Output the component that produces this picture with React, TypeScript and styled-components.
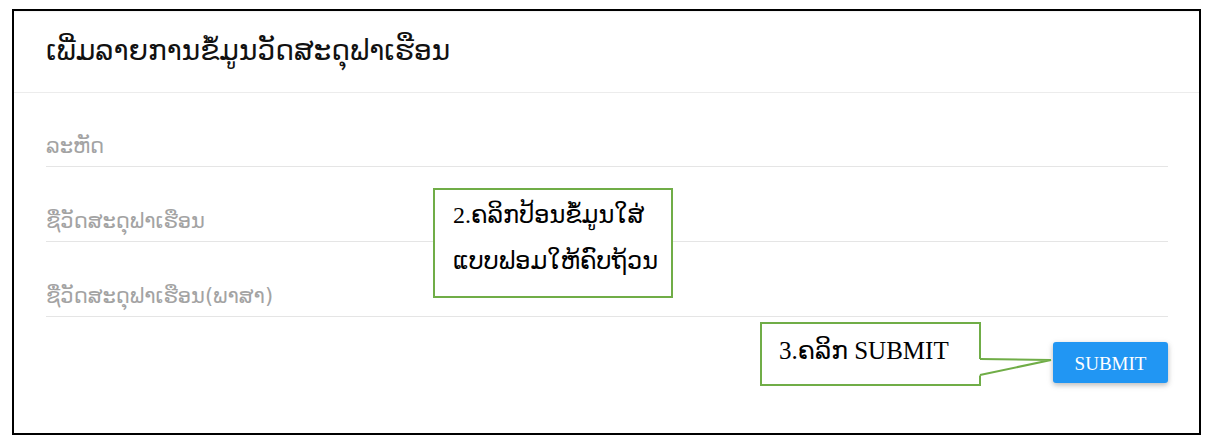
import styled, { createGlobalStyle } from "styled-components";

const GlobalStyle = createGlobalStyle`
  body {
    margin: 0;
    background: #fff;
    font-family: "DejaVu Sans", sans-serif;
  }
`;

const fields = ["ລະຫັດ", "ຊື່ວັດສະດຸຟາເຮືອນ", "ຊື່ວັດສະດຸຟາເຮືອນ(ພາສາ)"];

export default function App() {
  return (
    <>
      <GlobalStyle />
      <Frame>
        <CardHeader>
          <Title>ເພີ່ມລາຍການຂໍ້ມູນວັດສະດຸຟາເຮືອນ</Title>
        </CardHeader>
        <Form>
          {fields.map((label) => (
            <Field key={label}>
              <Placeholder>{label}</Placeholder>
            </Field>
          ))}
          <Footer>
            <SubmitButton>Submit</SubmitButton>
          </Footer>
        </Form>

        <Callout $left={419} $top={177} $width={240} $height={110}>
          <CalloutText>
            2.ຄລິກປ້ອນຂໍ້ມູນໃສ່
            <br />
            ແບບຟອມໃຫ້ຄົບຖ້ວນ
          </CalloutText>
        </Callout>

        <Callout $left={746} $top={311} $width={221} $height={64}>
          <CalloutText $single>3.ຄລິກ SUBMIT</CalloutText>
        </Callout>
        <Tail width="85" height="30" viewBox="0 0 85 30">
          <polygon points="2,9 76,10 2,26" fill="#fff" />
          <polyline
            points="5,9 76,10 5,25"
            fill="none"
            stroke="#70ad47"
            strokeWidth="2"
            strokeLinejoin="miter"
          />
        </Tail>
      </Frame>
    </>
  );
}

const Frame = styled.div`
  position: relative;
  box-sizing: border-box;
  margin: 9px 0 0 12px;
  width: 1189px;
  height: 426px;
  border: 2px solid #000;
  background: #fff;
`;

const CardHeader = styled.div`
  height: 82px;
  box-sizing: border-box;
  display: flex;
  align-items: center;
  padding: 0 32px 2px;
  border-bottom: 1px solid #ececec;
  box-shadow: inset 0 2px 2px -1px rgba(0, 0, 0, 0.06);
`;

const Title = styled.h1`
  margin: 0;
  font-size: 28px;
  font-weight: normal;
  color: #111;
  font-family: "DejaVu Sans", sans-serif;
`;

const Form = styled.div`
  padding: 0 31px 0 32px;
`;

const Field = styled.div`
  height: 74px;
  box-sizing: border-box;
  display: flex;
  align-items: flex-end;
  padding-bottom: 8px;
  border-bottom: 1px solid #e5e5e5;
  & + & {
    height: 75px;
  }
`;

const Placeholder = styled.span`
  font-size: 21px;
  line-height: 24px;
  color: #a3a3a3;
  font-family: "DejaVu Sans", sans-serif;
`;

const Footer = styled.div`
  display: flex;
  justify-content: flex-end;
  padding-top: 25px;
`;

const SubmitButton = styled.button`
  width: 115px;
  height: 41px;
  padding: 3px 0 0;
  border: none;
  border-radius: 3px;
  background: #2196f3;
  color: #fff;
  font-family: "Liberation Serif", serif;
  font-size: 19px;
  text-transform: uppercase;
  box-shadow: 0 2px 5px rgba(0, 0, 0, 0.22), 0 2px 8px rgba(0, 0, 0, 0.08);
  cursor: pointer;
`;

const Callout = styled.div<{ $left: number; $top: number; $width: number; $height: number }>`
  position: absolute;
  left: ${(p) => p.$left}px;
  top: ${(p) => p.$top}px;
  width: ${(p) => p.$width}px;
  height: ${(p) => p.$height}px;
  box-sizing: border-box;
  border: 2px solid #70ad47;
  background: #fff;
`;

const CalloutText = styled.div<{ $single?: boolean }>`
  padding: ${(p) => (p.$single ? "11px 0 0 17px" : "2px 0 0 18px")};
  font-family: "Liberation Serif", "DejaVu Sans", serif;
  font-size: ${(p) => (p.$single ? "25px" : "24px")};
  line-height: ${(p) => (p.$single ? "32px" : "46px")};
  color: #000;
  white-space: nowrap;
`;

const Tail = styled.svg`
  position: absolute;
  left: 961px;
  top: 339px;
  overflow: visible;
`;
